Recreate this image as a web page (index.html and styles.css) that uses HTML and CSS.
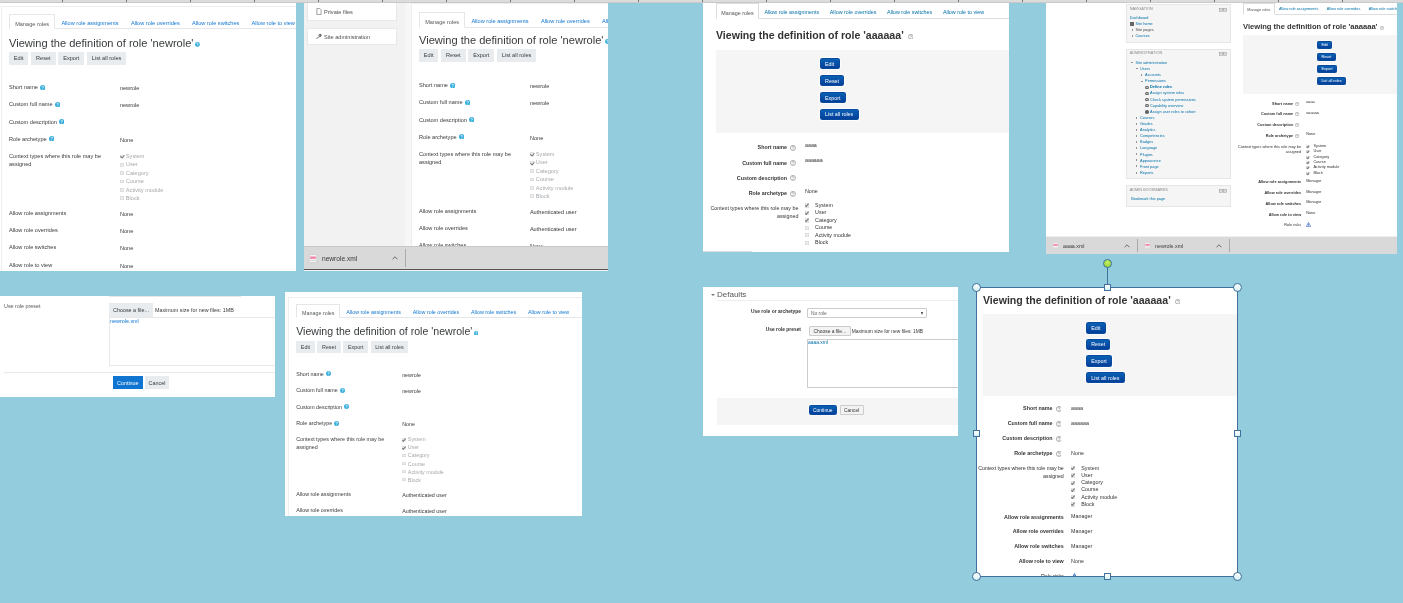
FILE: index.html
```html
<!DOCTYPE html>
<html lang="en">
<head>
<meta charset="utf-8">
<title>Viewing the definition of role</title>
<link rel="stylesheet" href="styles.css">
</head>
<body>
<svg width="0" height="0" class="defs">
  <symbol id="help-b" viewBox="0 0 10 10"><circle cx="5" cy="5" r="5" fill="#3bb0dc"/><path d="M3.6 3.9c0-2 3-2 3 0 0 1.200-1.600 1.100-1.600 2.400" fill="none" stroke="#fff" stroke-width="1.300"/><circle cx="5" cy="7.900" r=".8" fill="#fff"/></symbol>
  <symbol id="help-c" viewBox="0 0 10 10"><circle cx="5" cy="5" r="4.300" fill="none" stroke="#777" stroke-width="1"/><path d="M3.700 3.900c0-1.800 2.600-1.800 2.600 0 0 1-1.300 1-1.300 2.100" fill="none" stroke="#777" stroke-width="1"/><circle cx="5" cy="7.500" r=".7" fill="#777"/></symbol>
  <symbol id="xml" viewBox="0 0 10 11"><rect x=".5" y=".5" width="9" height="10" rx="1.200" fill="#f4f4f4" stroke="#bbb" stroke-width=".6"/><rect x="1.500" y="3" width="7" height="3" fill="#f08aa8"/><rect x="2" y="7.500" width="6" height="1" fill="#ccc"/></symbol>
  <symbol id="chev" viewBox="0 0 10 6"><path d="M1 5l4-4 4 4" fill="none" stroke="#555" stroke-width="1.400"/></symbol>
  <symbol id="risk" viewBox="0 0 10 10"><path d="M5 .8L9.300 9.200H.7z" fill="#fff" stroke="#3a62c8" stroke-width="1.300"/><rect x="4.300" y="3.500" width="1.400" height="3.300" fill="#3a62c8"/><rect x="4.300" y="7.300" width="1.400" height="1.200" fill="#3a62c8"/></symbol>
  <symbol id="dock" viewBox="0 0 10 5"><rect x=".4" y=".4" width="4" height="4" fill="none" stroke="#999" stroke-width=".7"/><rect x="5.600" y=".4" width="4" height="4" fill="none" stroke="#999" stroke-width=".7"/><path d="M.4 2.400h4M5.600 2.400h4" stroke="#999" stroke-width=".7"/></symbol>
</svg>

<div class="ruler"></div>
<main class="canvas">

  <!-- Window 1 : Boost view of newrole -->
  <section class="win win-a boost">
    <div class="card">
      <nav class="tabs">
        <a class="tab active">Manage roles</a><a class="tab">Allow role assignments</a><a class="tab">Allow role overrides</a><a class="tab">Allow role switches</a><a class="tab">Allow role to view</a>
      </nav>
      <h2 class="title">Viewing the definition of role 'newrole'<svg class="help"><use href="#help-b"/></svg></h2>
      <div class="btns"><button class="btn">Edit</button><button class="btn">Reset</button><button class="btn">Export</button><button class="btn">List all roles</button></div>
      <div class="rows">
        <div class="row"><div class="lbl">Short name<svg class="help"><use href="#help-b"/></svg></div><div class="val">newrole</div></div>
        <div class="row"><div class="lbl">Custom full name<svg class="help"><use href="#help-b"/></svg></div><div class="val">newrole</div></div>
        <div class="row"><div class="lbl">Custom description<svg class="help"><use href="#help-b"/></svg></div><div class="val"></div></div>
        <div class="row"><div class="lbl">Role archetype<svg class="help"><use href="#help-b"/></svg></div><div class="val">None</div></div>
        <div class="row row-ctx"><div class="lbl">Context types where this role may be assigned</div>
          <ul class="ctx"><li class="on">System</li><li>User</li><li>Category</li><li>Course</li><li>Activity module</li><li>Block</li></ul></div>
        <div class="row"><div class="lbl">Allow role assignments</div><div class="val">None</div></div>
        <div class="row"><div class="lbl">Allow role overrides</div><div class="val">None</div></div>
        <div class="row"><div class="lbl">Allow role switches</div><div class="val">None</div></div>
        <div class="row"><div class="lbl">Allow role to view</div><div class="val">None</div></div>
      </div>
    </div>
  </section>

  <!-- Window 2 : Boost with side drawer and download bar -->
  <section class="win win-b boost">
    <div class="split">
      <aside class="drawer">
        <div class="drawer-item"><svg class="drawer-ico" viewBox="0 0 8 10"><path d="M1 .5h4l2 2v7H1z" fill="none" stroke="#555" stroke-width=".8"/></svg>Private files</div>
        <div class="drawer-item"><svg class="drawer-ico" viewBox="0 0 10 10"><path d="M1 9l4.500-4.500M4.500 3.500a2.300 2.300 0 0 1 3.300-2L6.300 3l.7.7 1.500-1.500a2.300 2.300 0 0 1-3 3" fill="none" stroke="#333" stroke-width="1.300"/></svg>Site administration</div>
      </aside>
      <div class="card card-b">
        <nav class="tabs">
          <a class="tab active">Manage roles</a><a class="tab">Allow role assignments</a><a class="tab">Allow role overrides</a><a class="tab">Allow role switches</a><a class="tab">Allow role to view</a>
        </nav>
        <h2 class="title">Viewing the definition of role 'newrole'<svg class="help"><use href="#help-b"/></svg></h2>
        <div class="btns"><button class="btn">Edit</button><button class="btn">Reset</button><button class="btn">Export</button><button class="btn">List all roles</button></div>
        <div class="rows">
          <div class="row"><div class="lbl">Short name<svg class="help"><use href="#help-b"/></svg></div><div class="val">newrole</div></div>
          <div class="row"><div class="lbl">Custom full name<svg class="help"><use href="#help-b"/></svg></div><div class="val">newrole</div></div>
          <div class="row"><div class="lbl">Custom description<svg class="help"><use href="#help-b"/></svg></div><div class="val"></div></div>
          <div class="row"><div class="lbl">Role archetype<svg class="help"><use href="#help-b"/></svg></div><div class="val">None</div></div>
          <div class="row row-ctx"><div class="lbl">Context types where this role may be assigned</div>
            <ul class="ctx"><li class="on">System</li><li class="on">User</li><li>Category</li><li>Course</li><li>Activity module</li><li>Block</li></ul></div>
          <div class="row"><div class="lbl">Allow role assignments</div><div class="val">Authenticated user</div></div>
          <div class="row"><div class="lbl">Allow role overrides</div><div class="val">Authenticated user</div></div>
          <div class="row"><div class="lbl">Allow role switches</div><div class="val">None</div></div>
        </div>
      </div>
    </div>
    <footer class="dlbar dlbar-b">
      <div class="dl"><svg class="dl-file"><use href="#xml"/></svg><span class="dl-name">newrole.xml</span><svg class="dl-chev"><use href="#chev"/></svg></div>
    </footer>
  </section>

  <!-- Window 3 : Boost file picker -->
  <section class="win win-c boost">
    <div class="stub"></div>
    <div class="preset">
      <div class="preset-lbl">Use role preset</div>
      <div class="preset-main">
        <div class="picker"><button class="btn btn-file">Choose a file...</button><span>Maximum size for new files: 1MB</span></div>
        <div class="filebox"><a class="filelink">newrole.xml</a></div>
      </div>
    </div>
    <div class="actions">
      <button class="btn btn-primary">Continue</button><button class="btn">Cancel</button>
    </div>
  </section>

  <!-- Window 4 : Boost view, narrow -->
  <section class="win win-d boost">
    <div class="card">
      <nav class="tabs">
        <a class="tab active">Manage roles</a><a class="tab">Allow role assignments</a><a class="tab">Allow role overrides</a><a class="tab">Allow role switches</a><a class="tab">Allow role to view</a>
      </nav>
      <h2 class="title">Viewing the definition of role 'newrole'<svg class="help"><use href="#help-b"/></svg></h2>
      <div class="btns"><button class="btn">Edit</button><button class="btn">Reset</button><button class="btn">Export</button><button class="btn">List all roles</button></div>
      <div class="rows">
        <div class="row"><div class="lbl">Short name<svg class="help"><use href="#help-b"/></svg></div><div class="val">newrole</div></div>
        <div class="row"><div class="lbl">Custom full name<svg class="help"><use href="#help-b"/></svg></div><div class="val">newrole</div></div>
        <div class="row"><div class="lbl">Custom description<svg class="help"><use href="#help-b"/></svg></div><div class="val"></div></div>
        <div class="row"><div class="lbl">Role archetype<svg class="help"><use href="#help-b"/></svg></div><div class="val">None</div></div>
        <div class="row row-ctx"><div class="lbl">Context types where this role may be assigned</div>
          <ul class="ctx"><li class="on">System</li><li class="on">User</li><li>Category</li><li>Course</li><li>Activity module</li><li>Block</li></ul></div>
        <div class="row"><div class="lbl">Allow role assignments</div><div class="val">Authenticated user</div></div>
        <div class="row"><div class="lbl">Allow role overrides</div><div class="val">Authenticated user</div></div>
      </div>
    </div>
  </section>

  <!-- Window 5 : Clean view of aaaaaa -->
  <section class="win win-e clean">
    <nav class="tabs">
      <a class="tab active">Manage roles</a><a class="tab">Allow role assignments</a><a class="tab">Allow role overrides</a><a class="tab">Allow role switches</a><a class="tab">Allow role to view</a>
    </nav>
    <h2 class="title">Viewing the definition of role 'aaaaaa'<svg class="help"><use href="#help-c"/></svg></h2>
    <div class="btnbox"><button class="cbtn">Edit</button><button class="cbtn">Reset</button><button class="cbtn">Export</button><button class="cbtn">List all roles</button></div>
    <div class="rows">
      <div class="row"><div class="lbl has-help"><b>Short name</b><svg class="help"><use href="#help-c"/></svg></div><div class="val">aaaa</div></div>
      <div class="row"><div class="lbl has-help"><b>Custom full name</b><svg class="help"><use href="#help-c"/></svg></div><div class="val">aaaaaa</div></div>
      <div class="row"><div class="lbl has-help"><b>Custom description</b><svg class="help"><use href="#help-c"/></svg></div><div class="val"></div></div>
      <div class="row"><div class="lbl has-help"><b>Role archetype</b><svg class="help"><use href="#help-c"/></svg></div><div class="val">None</div></div>
      <div class="row row-ctx"><div class="lbl lbl-plain">Context types where this role may be assigned</div>
        <ul class="ctx"><li class="on">System</li><li class="on">User</li><li class="on">Category</li><li>Course</li><li>Activity module</li><li>Block</li></ul></div>
    </div>
  </section>

  <!-- Window 6 : Clean defaults form -->
  <section class="win win-f clean">
    <div class="legend"><span class="legend-arrow"></span>Defaults</div>
    <div class="form-row"><div class="form-lbl">Use role or archetype</div><div class="select"><span>No role</span><i class="select-arrow"></i></div></div>
    <div class="form-row form-row-file"><div class="form-lbl">Use role preset</div>
      <div class="form-main"><div class="picker"><button class="fbtn">Choose a file...</button><span>Maximum size for new files: 1MB</span></div>
        <div class="filebox"><a class="filelink">aaaa.xml</a></div></div></div>
    <div class="formfoot"><button class="cbtn">Continue</button><button class="fbtn">Cancel</button></div>
  </section>

  <!-- Window 7 : Clean, with blocks and download bar -->
  <section class="win win-g clean">
    <div class="g-body">
      <div class="g-gutter"></div>
      <aside class="blocks">
        <div class="block">
          <div class="block-h">NAVIGATION<svg class="dock"><use href="#dock"/></svg></div>
          <ul class="tree">
            <li class="t0">Dashboard</li>
            <li class="t1 home">Site home</li>
            <li class="t1 arrow dark">Site pages</li>
            <li class="t1 arrow">Courses</li>
          </ul>
        </div>
        <div class="block">
          <div class="block-h">ADMINISTRATION<svg class="dock"><use href="#dock"/></svg></div>
          <ul class="tree">
            <li class="t1 open">Site administration</li>
            <li class="t2 open">Users</li>
            <li class="t3 arrow">Accounts</li>
            <li class="t3 open">Permissions</li>
            <li class="t4 gear"><b>Define roles</b></li>
            <li class="t4 gear">Assign system roles</li>
            <li class="t4 gear">Check system permissions</li>
            <li class="t4 gear">Capability overview</li>
            <li class="t4 gear">Assign user roles to cohort</li>
            <li class="t2 arrow">Courses</li>
            <li class="t2 arrow">Grades</li>
            <li class="t2 arrow">Analytics</li>
            <li class="t2 arrow">Competencies</li>
            <li class="t2 arrow">Badges</li>
            <li class="t2 arrow">Language</li>
            <li class="t2 arrow">Plugins</li>
            <li class="t2 arrow">Appearance</li>
            <li class="t2 arrow">Front page</li>
            <li class="t2 arrow">Reports</li>
          </ul>
        </div>
        <div class="block block-last">
          <div class="block-h">ADMIN BOOKMARKS<svg class="dock"><use href="#dock"/></svg></div>
          <ul class="tree"><li class="t0b">Bookmark this page</li></ul>
        </div>
      </aside>
      <div class="g-main">
        <nav class="tabs">
          <a class="tab active">Manage roles</a><a class="tab">Allow role assignments</a><a class="tab">Allow role overrides</a><a class="tab">Allow role switches</a>
        </nav>
        <h2 class="title">Viewing the definition of role 'aaaaaa'<svg class="help"><use href="#help-c"/></svg></h2>
        <div class="btnbox"><button class="cbtn">Edit</button><button class="cbtn">Reset</button><button class="cbtn">Export</button><button class="cbtn">List all roles</button></div>
        <div class="rows">
          <div class="row"><div class="lbl has-help"><b>Short name</b><svg class="help"><use href="#help-c"/></svg></div><div class="val">aaaa</div></div>
          <div class="row"><div class="lbl has-help"><b>Custom full name</b><svg class="help"><use href="#help-c"/></svg></div><div class="val">aaaaaa</div></div>
          <div class="row"><div class="lbl has-help"><b>Custom description</b><svg class="help"><use href="#help-c"/></svg></div><div class="val"></div></div>
          <div class="row"><div class="lbl has-help"><b>Role archetype</b><svg class="help"><use href="#help-c"/></svg></div><div class="val">None</div></div>
          <div class="row row-ctx"><div class="lbl lbl-plain">Context types where this role may be assigned</div>
            <ul class="ctx"><li class="on">System</li><li class="on">User</li><li class="on">Category</li><li class="on">Course</li><li class="on">Activity module</li><li class="on">Block</li></ul></div>
          <div class="row"><div class="lbl"><b>Allow role assignments</b></div><div class="val">Manager</div></div>
          <div class="row"><div class="lbl"><b>Allow role overrides</b></div><div class="val">Manager</div></div>
          <div class="row"><div class="lbl"><b>Allow role switches</b></div><div class="val">Manager</div></div>
          <div class="row"><div class="lbl"><b>Allow role to view</b></div><div class="val">None</div></div>
          <div class="row"><div class="lbl lbl-plain">Role risks</div><div class="val"><svg class="risk"><use href="#risk"/></svg></div></div>
        </div>
      </div>
    </div>
    <footer class="dlbar dlbar-g">
      <div class="dl"><svg class="dl-file"><use href="#xml"/></svg><span class="dl-name">aaaa.xml</span><svg class="dl-chev"><use href="#chev"/></svg></div>
      <div class="dl"><svg class="dl-file"><use href="#xml"/></svg><span class="dl-name">newrole.xml</span><svg class="dl-chev"><use href="#chev"/></svg></div>
    </footer>
  </section>

  <!-- Window 8 : Selected pasted image -->
  <section class="win win-h clean">
    <h2 class="title">Viewing the definition of role 'aaaaaa'<svg class="help"><use href="#help-c"/></svg></h2>
    <div class="btnbox"><button class="cbtn">Edit</button><button class="cbtn">Reset</button><button class="cbtn">Export</button><button class="cbtn">List all roles</button></div>
    <div class="rows">
      <div class="row"><div class="lbl has-help"><b>Short name</b><svg class="help"><use href="#help-c"/></svg></div><div class="val">aaaa</div></div>
      <div class="row"><div class="lbl has-help"><b>Custom full name</b><svg class="help"><use href="#help-c"/></svg></div><div class="val">aaaaaa</div></div>
      <div class="row"><div class="lbl has-help"><b>Custom description</b><svg class="help"><use href="#help-c"/></svg></div><div class="val"></div></div>
      <div class="row"><div class="lbl has-help"><b>Role archetype</b><svg class="help"><use href="#help-c"/></svg></div><div class="val">None</div></div>
      <div class="row row-ctx"><div class="lbl lbl-plain">Context types where this role may be assigned</div>
        <ul class="ctx"><li class="on">System</li><li class="on">User</li><li class="on">Category</li><li class="on">Course</li><li class="on">Activity module</li><li class="on">Block</li></ul></div>
      <div class="row"><div class="lbl"><b>Allow role assignments</b></div><div class="val">Manager</div></div>
      <div class="row"><div class="lbl"><b>Allow role overrides</b></div><div class="val">Manager</div></div>
      <div class="row"><div class="lbl"><b>Allow role switches</b></div><div class="val">Manager</div></div>
      <div class="row"><div class="lbl"><b>Allow role to view</b></div><div class="val">None</div></div>
      <div class="row"><div class="lbl lbl-plain">Role risks</div><div class="val"><svg class="risk"><use href="#risk"/></svg></div></div>
    </div>
  </section>
  <div class="sel-frame">
    <span class="stem"></span>
    <span class="h-rot"></span>
    <span class="h-c h-tl"></span><span class="h-c h-tr"></span><span class="h-c h-bl"></span><span class="h-c h-br"></span>
    <span class="h-s h-t"></span><span class="h-s h-b"></span><span class="h-s h-l"></span><span class="h-s h-r"></span>
  </div>
</main>
</body>
</html>
```

FILE: styles.css
```css
* { box-sizing: border-box; }
html, body { margin: 0; padding: 0; overflow: hidden; }
body { width: 1403px; height: 603px; background: #93cddd; font-family: "Liberation Sans", Arial, sans-serif; }
.defs { position: absolute; }
ul { list-style: none; margin: 0; padding: 0; }
h2 { margin: 0; }
button { font: inherit; border: 0; margin: 0; padding: 0; }

.ruler {
  height: 3px;
  background: repeating-linear-gradient(90deg, #dcdcdc 0 62.500px, #777 62.500px 63.500px, #dcdcdc 63.500px 64px);
  border-bottom: 1px solid #c9c9c9;
}
.canvas { position: absolute; left: 0; top: 0; width: 1403px; height: 603px; }

.win { position: absolute; background: #fff; overflow: hidden; color: #373a3c; filter: blur(.4px); }
.win-a { left: 0; top: 3px; width: 296px; height: 268px; font-size: 5.600px; }
.win-b { left: 304px; top: 3px; width: 304px; height: 268px; font-size: 5.600px; display: flex; flex-direction: column; background: #f2f2f2; }
.win-c { left: 0; top: 296px; width: 275px; height: 101px; font-size: 5.400px; }
.win-d { left: 285px; top: 292px; width: 297px; height: 224px; font-size: 5.350px; }
.win-e { left: 703px; top: 3px; width: 306px; height: 249px; font-size: 5.350px; padding-left: 13px; }
.win-e::after { content: ""; position: absolute; left: 0; bottom: 0; width: 49px; height: 1px; background: #ddd; }
.win-f { left: 703px; top: 287px; width: 255px; height: 149px; font-size: 4.900px; padding-left: 14px; }
.win-g { left: 1046px; top: 3px; width: 351px; height: 251px; font-size: 3.850px; display: flex; flex-direction: column; }
.win-h { left: 976px; top: 287px; width: 262px; height: 290px; font-size: 5.350px; padding-left: 7px; }

/* ---------- Boost theme ---------- */
.boost .card { margin: 3px 0 0 1px; padding: 1.300em 0 0 1.250em; border: 1px solid #eceeef; border-right: 0; border-bottom: 0; height: 100%; }
.boost .tabs { display: flex; height: 2.700em; border-bottom: 1px solid #e4e6e8; white-space: nowrap; }
.boost .tab { padding: .950em 1.100em 0; color: #1177d1; margin-bottom: -1px; }
.boost .tab.active { padding: .950em calc(1.100em - 1px) 0; color: #55595c; background: #fff; border: 1px solid #e4e6e8; border-bottom-color: #fff; }
.boost .title { font-weight: 400; font-size: 1.980em; line-height: 1.200; margin-top: .650em; white-space: nowrap; color: #373a3c; }
.boost .title .help { width: .440em; height: .440em; margin-left: .140em; vertical-align: -.020em; }
.boost .btns { display: flex; gap: .500em; margin-top: .300em; }
.btn { background: #e9ecef; color: #373a3c; padding: 0 .870em; height: 2.360em; font-size: 1em; }
.btn-primary { background: #0f75d0; color: #fff; }
.boost .rows { margin-top: 3.300em; }
.boost .row { display: flex; min-height: 3.070em; }
.boost .row-ctx { min-height: 10.200em; }
.boost .lbl { width: 19.800em; padding-right: 3em; line-height: 1.500; flex: none; }
.boost .help { width: .950em; height: .950em; margin-left: .400em; vertical-align: -.150em; }
.boost .val { line-height: 1.500; padding-top: .180em; }
.boost .ctx { line-height: 1.500; color: #a5a9ad; }
.ctx li { position: relative; padding-left: 1.070em; white-space: nowrap; }
.ctx li::before { content: ""; position: absolute; left: 0; top: .450em; width: .650em; height: .650em; background: #ececec; box-shadow: inset 0 0 0 .100em #d6d6d6; }
.ctx li.on::after { content: ""; position: absolute; left: .180em; top: .420em; width: .280em; height: .480em; border: solid #777; border-width: 0 .120em .120em 0; transform: rotate(40deg); }

.split { flex: 1; display: flex; min-height: 0; overflow: hidden; }
.drawer { width: 107px; padding: 0 8px 0 3px; background: #f2f2f2; border-right: 6px solid #f7f7f7; flex: none; display: flex; flex-direction: column; gap: 7px; }
.drawer-item { height: 18px; background: #fff; border: 1px solid #e8e8e8; border-top: 0; padding: 0 0 0 8px; display: flex; align-items: center; gap: 2px; color: #4b4f52; }
.drawer-item + .drawer-item { height: 17px; border-top: 1px solid #e8e8e8; }
.drawer-ico { width: 6px; height: 7px; flex: none; }
.boost .card.card-b { flex: 1; min-width: 0; background: #fff; margin: 0; padding: 1.500em 0 0 1.250em; overflow: hidden; height: auto; }
.card-b .title { margin-top: .560em; }
.card-b .rows { margin-top: 3.450em; }
.dlbar { flex: none; background: #d9d9d9; display: flex; }
.dlbar-b { height: 24px; border-bottom: 1px solid #555; border-top: 1px solid #c8c8c8; margin-bottom: 1px; font-size: 6.600px; }
.dl { display: flex; align-items: center; height: 100%; border-right: 1px solid #aaa; }
.dlbar-b .dl { width: 102px; padding: 0 0 0 4px; margin: 2px 0; height: auto; }
.dl-file { width: 10px; height: 9px; flex: none; }
.dl-name { margin-left: 4px; color: #3a3a3a; flex: 1; }
.dl-chev { width: 6px; height: 4px; margin-right: 7px; flex: none; }

.boost.win-d .card { margin: 5px 0 0 3px; padding: 1.100em 0 0 1.350em; }
.win-d .btns { margin-top: .500em; }
.win-d .rows { margin-top: 3.100em; }

.stub { margin-left: 109px; width: 132px; height: 1px; background: #e6e6e6; }
.preset { display: flex; padding: 6px 0 0 4px; }
.preset-lbl { width: 105px; margin-top: .400px; flex: none; color: #55595c; }
.preset-main { flex: 1; min-width: 0; }
.picker { display: flex; align-items: center; gap: 2px; white-space: nowrap; }
.btn-file { padding: 0 4px; height: 14px; color: #373a3c; }
.filebox { border: 1px solid #e8e8e8; border-right: 0; margin-top: 0; height: 49px; }
.filelink { color: #1177d1; display: block; line-height: 1.300; }
.actions { margin: 6px 0 0 4px; padding: 3px 0 0 109px; border-top: 1px solid #e8e8e8; display: flex; gap: 2px; }
.actions .btn { height: 13px; padding: 0 4px; }

/* ---------- Clean theme ---------- */
.clean { color: #333; }
.clean .tabs { display: flex; height: 16px; border-bottom: 1px solid #ddd; white-space: nowrap; }
.clean .tab { padding: 1.050em 1em 0; color: #0070a8; }
.clean .tab.active { padding: 1.050em calc(1em - 1px) 0; color: #555; background: #fff; border: 1px solid #ddd; border-bottom-color: #fff; margin-bottom: -1px; }
.clean .title { font-weight: 700; font-size: 1.980em; line-height: 1.200; margin-top: .900em; white-space: nowrap; color: #333; }
.clean .title .help { width: .520em; height: .520em; margin-left: .400em; vertical-align: -.060em; }
.btnbox { background: #f5f5f5; margin-top: 1.670em; padding: 1.500em 0 0 19.400em; height: 15.500em; display: flex; flex-direction: column; align-items: flex-start; gap: 1.060em; }
.cbtn { height: 2.100em; padding: 0 .800em; color: #fff; background: linear-gradient(#0a60b4, #04409a); border: .100em solid #0a4a9c; border-radius: .300em; box-shadow: 0 0 0 .120em #fff; font-size: 1em; white-space: nowrap; }
.clean .rows { margin-top: 2em; }
.clean .row { display: flex; min-height: 2.860em; }
.clean .row-ctx { min-height: 8.800em; }
.clean .lbl { width: 17.900em; margin-left: -2.500em; text-align: right; line-height: 1.430; flex: none; padding-top: .100em; white-space: nowrap; }
.clean .lbl-plain { white-space: normal; }
.clean .lbl.has-help { padding-right: .470em; }
.clean .lbl .help { width: 1.100em; height: 1.100em; margin-left: .560em; vertical-align: -.250em; }
.clean .val { padding-left: 1.230em; line-height: 1.430; margin-top: -.300em; }
.clean .ctx { padding-left: 1.230em; line-height: 1.400; margin-top: -.600em; }
.clean .ctx li { padding-left: 1.900em; }
.clean .ctx li::before { top: .300em; width: .800em; height: .800em; }
.clean .ctx li.on::after { left: .250em; top: .300em; }
.risk { width: 1.300em; height: 1.300em; }

.legend { height: 13px; padding-top: 2px; margin-left: -6px; margin-bottom: 1px; font-size: 8px; color: #555; display: flex; align-items: center; gap: 2px; position: relative; }
.legend::after { content: ""; position: absolute; left: 6px; right: 0; bottom: -1px; height: 1px; background: #eee; }
.legend-arrow { width: 0; height: 0; border: 2px solid transparent; border-top: 2.500px solid #777; border-bottom: 0; }
.form-row { display: flex; margin-top: 8px; }
.form-row-file { margin-top: 8px; }
.form-lbl { width: 84px; flex: none; font-weight: 700; text-align: right; line-height: 1.500; }
.form-row .select { margin-left: 6px; width: 120px; height: 10px; border: 1px solid #ccc; border-radius: 1px; display: flex; align-items: center; justify-content: space-between; padding: 0 3px; color: #666; }
.select-arrow { width: 0; height: 0; border: 1.500px solid transparent; border-top: 3px solid #333; border-bottom: 0; }
.form-main { margin-left: 6px; flex: 1; min-width: 0; }
.fbtn { height: 10px; padding: 0 3.500px; background: #f3f3f3; border: 1px solid #ccc; border-radius: 1px; color: #333; font-size: 1em; }
.win-f .picker { padding-left: 2px; gap: 1px; }
.win-f .filebox { margin-top: 3px; height: 49px; border: 1px solid #ccc; border-right: 0; }
.win-f .filelink { color: #0070a8; }
.formfoot { background: #f5f5f5; margin-top: 10px; height: 27px; padding: 7px 0 0 92px; display: flex; gap: 3px; align-items: flex-start; }
.formfoot .cbtn { height: 10px; padding: 0 3px; }

.g-body { flex: 1; display: flex; min-height: 0; overflow: hidden; }
.g-gutter { width: 80px; flex: none; }
.blocks { width: 105px; flex: none; padding-top: 1px; display: flex; flex-direction: column; gap: 6px; color: #0070a8; }
.block { background: #f5f5f5; border: 1px solid #e6e6e6; padding: .400em 0 .650em .700em; }
.block-last { min-height: 22px; }
.block-h { color: #8a8a8a; display: flex; justify-content: space-between; padding-right: 3px; line-height: 1.500; margin-bottom: .700em; }
.dock { width: 8px; height: 4px; margin-top: 1px; }
.tree li { line-height: 1.590; position: relative; white-space: nowrap; }
.t0 { padding-left: 0; }
.t0b { padding-left: .400em; }
.t1 { padding-left: 1.500em; }
.t2 { padding-left: 2.700em; }
.t3 { padding-left: 4em; }
.t4 { padding-left: 5.300em; }
.dark { color: #444; }
.arrow::before, .open::before { content: ""; position: absolute; top: .450em; border: solid transparent; }
.arrow::before { margin-left: -1em; border-width: .350em 0 .350em .500em; border-left-color: #333; }
.open::before { margin-left: -1.100em; top: .600em; border-width: .500em .350em 0; border-top-color: #333; }
.gear::before { content: ""; position: absolute; margin-left: -1.250em; top: .400em; width: .850em; height: .850em; border-radius: 50%; background: radial-gradient(circle, #bbb 0 20%, #666 25%); }
.home::before { content: ""; position: absolute; margin-left: -1.300em; top: .350em; width: .900em; height: .800em; background: #666; }
.g-main { flex: 1; min-width: 0; margin-left: 12px; }
.win-g .tabs { height: 11.500px; padding-left: 0; }
.win-g .tab { padding: 1em 1.100em 0; }
.win-g .tab.active { padding: 1em calc(1.100em - 1px) 0; }
.win-g .title { margin-top: 1.050em; font-size: 1.970em; }
.win-g .btnbox { height: 15.400em; margin-top: .900em; padding: 1.500em 0 0 19.300em; gap: 1.050em; }
.win-g .cbtn { height: 2.100em; }
.win-g .rows { margin-top: 1.800em; }
.win-g .row { min-height: 2.790em; }
.win-g .row-ctx { min-height: 9.300em; }
.win-g .lbl { margin-left: -1.500em; width: 16.600em; }
.win-g .lbl.has-help { padding-right: .400em; }
.win-g .val { padding-left: 1.300em; }
.win-g .ctx { padding-left: 1.300em; margin-top: -.100em; }
.dlbar-g { height: 18px; border-top: 1px solid #eee; font-size: 5.300px; padding-left: 1px; }
.dlbar-g .dl { width: 91px; padding-left: 5px; margin: 2px 0; height: auto; }
.dlbar-g .dl + .dl { padding-left: 6px; width: 92px; }
.dlbar-g .dl-file { width: 7px; height: 7px; }

.win-h .title { margin-top: .620em; }
.win-h .btnbox { margin-top: 1.450em; padding-top: 1.550em; padding-left: 19.250em; height: 15.300em; gap: 1em; }
.win-h .rows { margin-top: 1.700em; }
.win-h .row { min-height: 2.800em; }
.win-h .row-ctx { min-height: 9em; }
.win-h .lbl { margin-left: -1.400em; width: 16.500em; }
.win-h .lbl-plain { letter-spacing: -.012em; }
.win-h .lbl.has-help { padding-right: .450em; }
.win-h .val { padding-left: 1.370em; margin-top: 0; }
.win-h .ctx { padding-left: 1.370em; margin-top: -.050em; line-height: 1.360; }

/* ---------- Selection frame (on-canvas overlay) ---------- */
.sel-frame { position: absolute; left: 976px; top: 287px; width: 262px; height: 290px; border: 1px solid #41719c; }
.stem { position: absolute; left: 129.500px; top: -24px; width: 1px; height: 24px; background: #41719c; }
.h-rot { position: absolute; left: 125.500px; top: -29px; width: 9px; height: 9px; border-radius: 50%; border: 1px solid #41719c; background: radial-gradient(circle at 50% 35%, #c8f06a, #8acb24); }
.h-c { position: absolute; width: 9px; height: 9px; border-radius: 50%; border: 1px solid #41719c; background: linear-gradient(#fff, #d4f0f5); }
.h-tl { left: -5px; top: -5px; } .h-tr { right: -5px; top: -5px; }
.h-bl { left: -5px; bottom: -5px; } .h-br { right: -5px; bottom: -5px; }
.h-s { position: absolute; width: 7px; height: 7px; border: 1px solid #41719c; background: linear-gradient(#fff, #d4f0f5); }
.h-t { left: 126.500px; top: -4px; } .h-b { left: 126.500px; bottom: -4px; }
.h-l { left: -4px; top: 141.500px; } .h-r { right: -4px; top: 141.500px; }
```
